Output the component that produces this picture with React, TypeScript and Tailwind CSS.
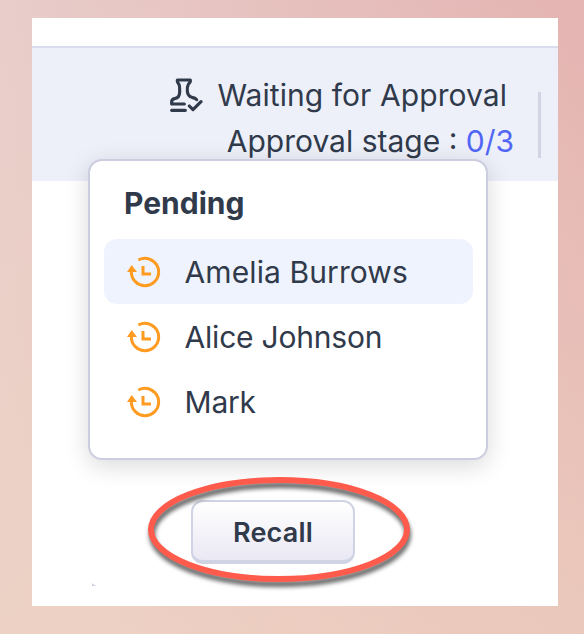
const approvers = [
  { name: "Amelia Burrows", active: true, tracking: "tracking-[0.1px]" },
  { name: "Alice Johnson", active: false, tracking: "tracking-[-0.2px]" },
  { name: "Mark", active: false, tracking: "tracking-[-0.2px]" },
];

const StampIcon = () => {
  return (
    <svg
      width="34"
      height="36"
      viewBox="30 32 102 108"
      fill="none"
      stroke="#303a4b"
      strokeWidth="9.5"
      strokeLinecap="round"
      strokeLinejoin="round"
      className="shrink-0"
    >
      <path d="M76 113H38V107C38 101 42 98 47 97C57 95 62 88 62 77C62 68 63 60 60 54C57 50 55 48 55 45V41H94V45C94 48 91 50 88 54C85 60 84 66 85 75C86 85 91 91 99 93C105 94 110 96 113 100" />
      <path d="M38 132H79" />
      <path d="M91 119L102 130L126 106" />
    </svg>
  );
};

const PendingIcon = () => {
  return (
    <svg
      width="34"
      height="32"
      viewBox="141 317 102 96"
      fill="none"
      stroke="#ff9b21"
      strokeWidth="9"
      className="shrink-0"
    >
      <path d="M175 329C203 315 236 334 236 365A41 41 0 0 1 154 365V360" />
      <path d="M189 347V371H213" />
      <path d="M155 344L141 365H171Z" fill="#ff9b21" stroke="none" />
    </svg>
  );
};

const Header = () => {
  return (
    <div className="h-[135px] border-t-2 border-[#dbdbee] bg-[#edf0f9] flex justify-end items-start pr-[17px] text-[30px] leading-[46px] whitespace-nowrap">
      <div className="pt-[24px] flex flex-col items-end">
        <div className="flex items-center gap-[14px] mr-[7px]">
          <StampIcon />
          <span className="tracking-[0.07px]">Waiting for Approval</span>
        </div>
        <div>
          Approval stage : <span className="text-[#5266f5]">0/3</span>
        </div>
      </div>
      <div className="w-[3px] h-[66px] mt-[44px] ml-[24px] bg-[#d3d3e3]" />
    </div>
  );
};

const PendingMenu = () => {
  return (
    <div className="relative -mt-[22px] ml-[56px] w-[400px] h-[301px] rounded-[14px] border-2 border-[#cdcde0] bg-white px-[14px] pt-[19px] shadow-[0_6px_24px_rgba(0,0,0,0.15)]">
      <h2 className="pl-[20px] h-[59px] text-[30px] leading-[46px] font-bold">
        Pending
      </h2>
      <ul>
        {approvers.map((a) => (
          <li
            key={a.name}
            className={`w-[369px] h-[65px] pl-[23px] rounded-[13px] flex items-center gap-[23.5px] ${
              a.active ? "bg-[#eff3fd]" : ""
            }`}
          >
            <PendingIcon />
            <span className={`text-[30px] leading-[40px] whitespace-nowrap ${a.tracking}`}>
              {a.name}
            </span>
          </li>
        ))}
      </ul>
    </div>
  );
};

const App = () => {
  return (
    <div className="w-[584px] h-[634px] overflow-hidden px-[32px] pt-[18px] bg-[linear-gradient(to_bottom,rgba(238,213,197,0)_0%,rgba(240,214,194,0.6)_100%),linear-gradient(to_right,#e8cdca,#e4b4b2)]">
      <div className="relative w-[526px] h-[588px] overflow-hidden bg-white pt-[28px] text-[#303a4b] font-[Inter,sans-serif]">
        <Header />
        <PendingMenu />
        <button className="block relative mt-[40px] ml-[159px] w-[164px] h-[64px] rounded-[12px] border-2 border-b-4 border-[#cfd3e3] bg-linear-to-b from-white to-[#eae8f4] pt-[3px] text-[27px] leading-[55px] font-semibold tracking-[0.2px]">
          Recall
        </button>
        {/* hand-drawn style marker around the button */}
        <svg
          width="284"
          height="126"
          viewBox="0 0 284 126"
          className="absolute left-[106px] top-[448px] pointer-events-none drop-shadow-[1px_5px_2px_rgba(0,0,0,0.6)]"
        >
          <ellipse cx="141" cy="63.5" rx="128" ry="49.5" fill="none" stroke="#ff5b4c" strokeWidth="6" />
        </svg>
        <svg width="6" height="4" viewBox="0 0 6 4" className="mt-[19px] ml-[60px]">
          <path d="M0 0Q1 2 5 3H0Z" fill="#cdcde0" />
        </svg>
      </div>
    </div>
  );
};

export default App;
